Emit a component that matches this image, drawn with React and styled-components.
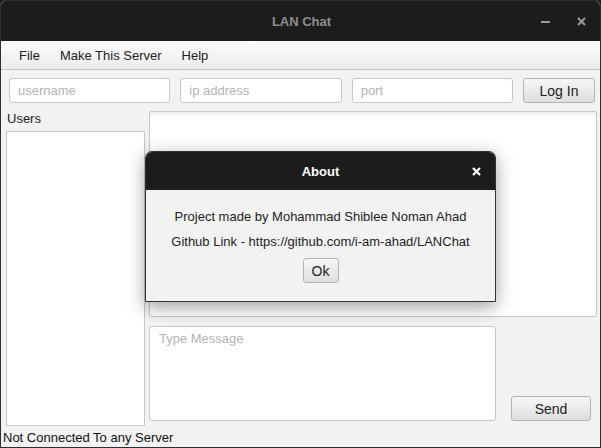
import styled, { createGlobalStyle } from "styled-components";

const GlobalStyle = createGlobalStyle`
  html, body {
    margin: 0;
    padding: 0;
    background: #1c1c1c;
  }
  * {
    box-sizing: border-box;
  }
`;

const Window = styled.div`
  position: relative;
  width: 601px;
  height: 448px;
  display: flex;
  flex-direction: column;
  background: #f2f2f2;
  border: 1px solid #2e2e2e;
  border-radius: 6px 6px 0 0;
  overflow: hidden;
  font-family: "Liberation Sans", Arial, sans-serif;
  font-size: 13px;
  color: #222;
`;

const TitleBar = styled.div`
  height: 40px;
  flex: none;
  display: grid;
  grid-template-columns: 1fr auto 1fr;
  align-items: center;
  background: #1c1c1c;
`;

const Title = styled.div`
  grid-column: 2;
  font-weight: bold;
  color: #8e8e8e;
  padding-left: 2px;
`;

const Controls = styled.div`
  justify-self: end;
  display: flex;
  align-items: center;
  gap: 27px;
  padding-right: 14px;
  color: #9a9a9a;
`;

const MenuBar = styled.div`
  height: 29px;
  flex: none;
  display: flex;
  align-items: center;
  padding-left: 8px;
  background: linear-gradient(#fbfbfb, #ececec);
  border-bottom: 1px solid #c6c6c6;
`;

const MenuItem = styled.span`
  padding: 0 10px;
  color: #222;
`;

const LoginRow = styled.div`
  flex: none;
  display: grid;
  grid-template-columns: 1fr 1fr 1fr 72px;
  gap: 10px;
  height: 25px;
  margin: 8px 5px 8px 8px;
`;

const Field = styled.input`
  width: 100%;
  height: 100%;
  border: 1px solid #c8c8c8;
  border-radius: 3px;
  background: #fff;
  padding: 0 8px;
  font: inherit;
  color: #222;
  outline: none;
  &::placeholder {
    color: #b4b4b4;
  }
`;

const Button = styled.button`
  width: ${(p) => p.$w || "100%"};
  height: 25px;
  border: 1px solid #b4b4b4;
  border-radius: 3px;
  background: linear-gradient(#f7f7f7, #dedede);
  font-family: "Liberation Sans", Arial, sans-serif;
  font-size: 14px;
  color: #222;
  padding: 0;
`;

const Main = styled.div`
  flex: none;
  height: 315px;
  display: grid;
  grid-template-columns: 139px 1fr;
  gap: 4px;
  padding: 0 3px 0 5px;
`;

const UsersColumn = styled.div`
  display: flex;
  flex-direction: column;
`;

const Label = styled.div`
  height: 20px;
  line-height: 15px;
  padding-left: 1px;
`;

const UserList = styled.div`
  flex: 1;
  background: #fff;
  border: 1px solid #c8c8c8;
`;

const ChatColumn = styled.div`
  display: flex;
  flex-direction: column;
  gap: 9px;
`;

const ChatArea = styled.div`
  height: 206px;
  background: #fff;
  border: 1px solid #c8c8c8;
  border-radius: 2px;
  box-shadow: inset 0 4px 5px -3px rgba(0, 0, 0, 0.12);
`;

const MessageRow = styled.div`
  height: 95px;
  display: flex;
  align-items: flex-end;
  gap: 15px;
`;

const MessageBox = styled.textarea`
  width: 347px;
  height: 100%;
  resize: none;
  border: 1px solid #c8c8c8;
  border-radius: 3px;
  background: #fff;
  padding: 4px 9px;
  font: inherit;
  outline: none;
  &::placeholder {
    color: #b4b4b4;
  }
`;

const StatusBar = styled.div`
  flex: none;
  height: 21px;
  display: flex;
  align-items: center;
  padding-left: 2px;
  padding-top: 1px;
  color: #111;
`;

const Dialog = styled.div`
  position: absolute;
  left: 144px;
  top: 150px;
  width: 351px;
  height: 151px;
  display: flex;
  flex-direction: column;
  border: 1px solid #333;
  border-radius: 7px 7px 0 0;
  background: #f2f2f2;
  box-shadow: 0 5px 18px rgba(0, 0, 0, 0.38);
  overflow: hidden;
`;

const DialogHeader = styled.div`
  height: 38px;
  flex: none;
  position: relative;
  display: flex;
  align-items: center;
  justify-content: center;
  background: #1c1c1c;
  color: #fff;
  font-weight: bold;
`;

const CloseIcon = styled.svg`
  position: absolute;
  right: 14px;
  top: 15px;
`;

const DialogBody = styled.div`
  display: flex;
  flex-direction: column;
  align-items: center;
  padding-top: 18px;
  gap: 8px;
  line-height: 17px;
  color: #1e1e1e;
`;

export default function App() {
  return (
    <>
      <GlobalStyle />
      <Window>
        <TitleBar>
          <Title>LAN Chat</Title>
          <Controls>
            <svg width="9" height="9" viewBox="0 0 9 9">
              <rect x="0" y="4" width="9" height="2" fill="currentColor" />
            </svg>
            <svg width="9" height="9" viewBox="0 0 9 9">
              <path d="M1 1 L8 8 M8 1 L1 8" stroke="currentColor" strokeWidth="2" />
            </svg>
          </Controls>
        </TitleBar>
        <MenuBar>
          <MenuItem>File</MenuItem>
          <MenuItem>Make This Server</MenuItem>
          <MenuItem>Help</MenuItem>
        </MenuBar>
        <LoginRow>
          <Field placeholder="username" />
          <Field placeholder="ip address" />
          <Field placeholder="port" />
          <Button>Log In</Button>
        </LoginRow>
        <Main>
          <UsersColumn>
            <Label>Users</Label>
            <UserList />
          </UsersColumn>
          <ChatColumn>
            <ChatArea />
            <MessageRow>
              <MessageBox placeholder="Type Message" />
              <Button $w="80px">Send</Button>
            </MessageRow>
          </ChatColumn>
        </Main>
        <StatusBar>Not Connected To any Server</StatusBar>
        <Dialog>
          <DialogHeader>
            About
            <CloseIcon width="9" height="9" viewBox="0 0 9 9">
              <path d="M1 1 L8 8 M8 1 L1 8" stroke="#fff" strokeWidth="2.2" />
            </CloseIcon>
          </DialogHeader>
          <DialogBody>
            <div>Project made by Mohammad Shiblee Noman Ahad</div>
            <div>Github Link - https://github.com/i-am-ahad/LANChat</div>
            <Button $w="36px">Ok</Button>
          </DialogBody>
        </Dialog>
      </Window>
    </>
  );
}
